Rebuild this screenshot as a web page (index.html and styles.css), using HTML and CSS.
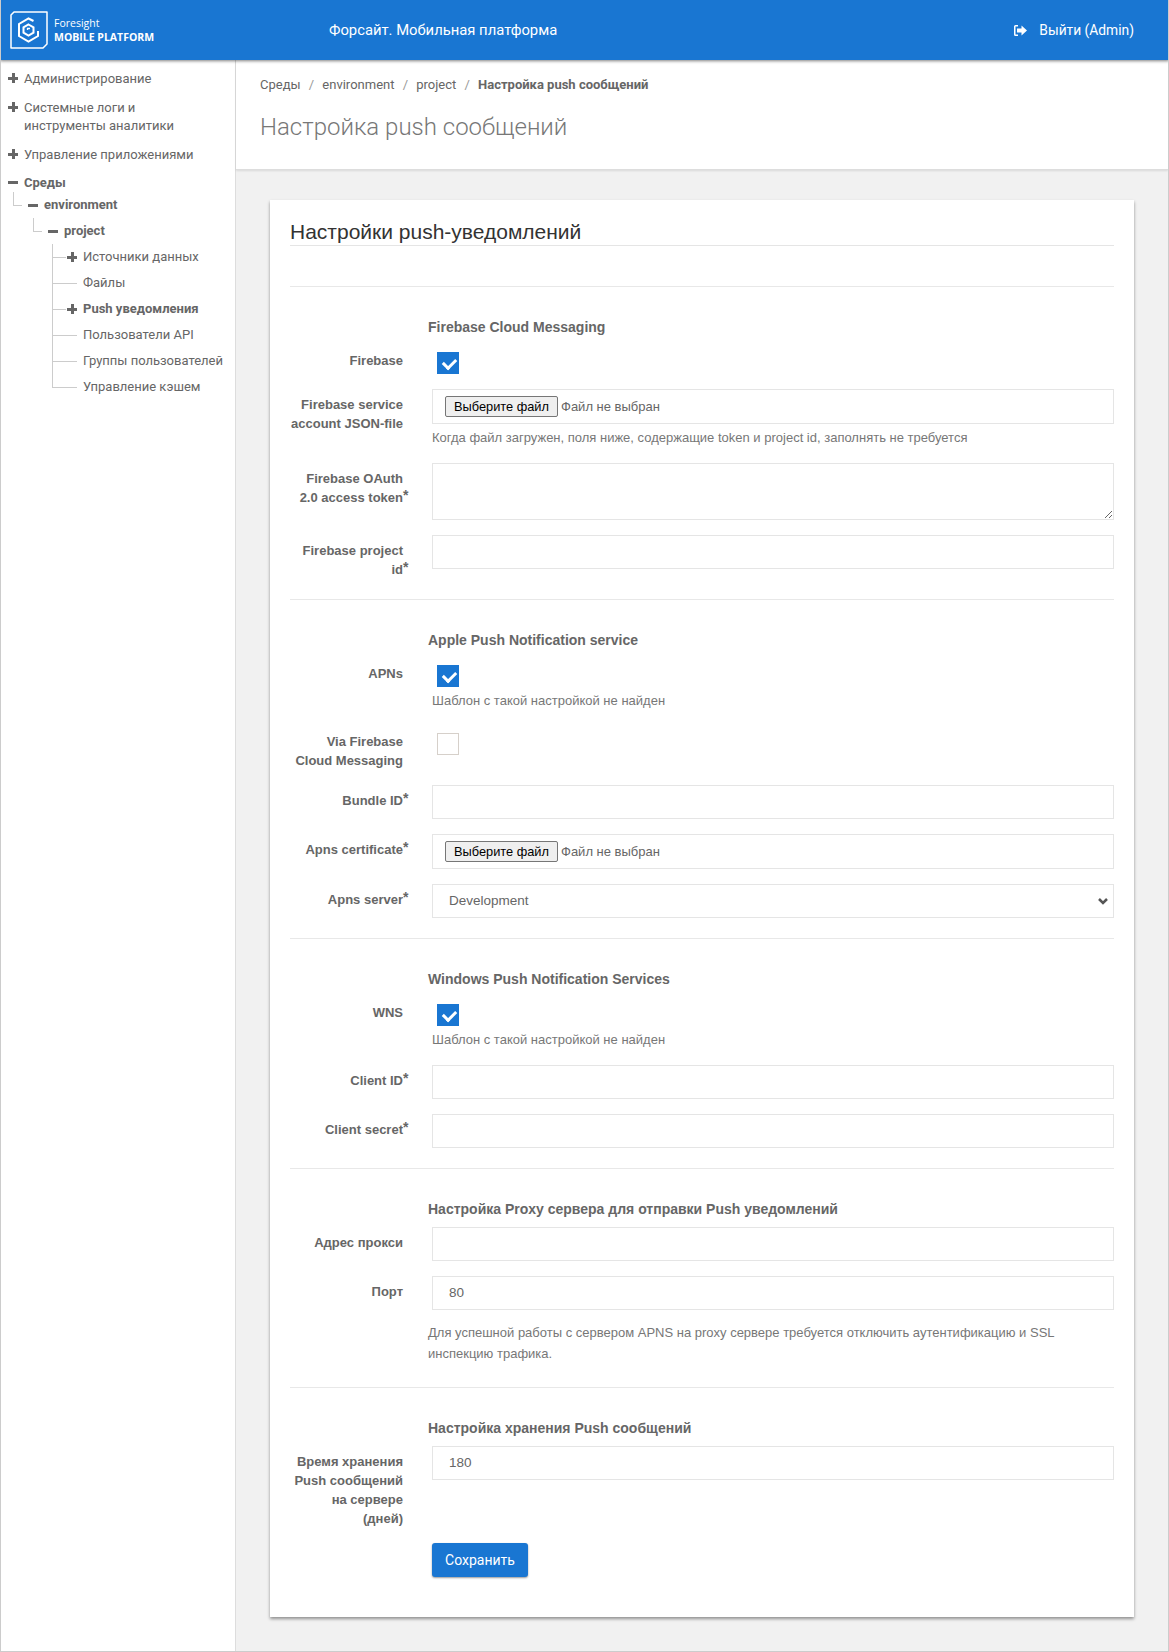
FILE: index.html
```html
<!DOCTYPE html>
<html lang="ru">
<head>
<meta charset="UTF-8">
<meta name="viewport" content="width=device-width, initial-scale=1.0">
<title>Настройка push сообщений</title>
<link rel="stylesheet" href="styles.css">
</head>
<body>
    <header class="topbar">
        <div class="logo">
            <svg class="logo-icon" width="38" height="38" viewBox="0 0 38 38" fill="none" stroke="#fff">
                <path d="M4 1H37V33L33 37H1V4Z" stroke-width="1.500" stroke-linejoin="round"/>
                <path d="M23.500 10L18.500 7.500L9 13V25L18.500 30.500L28 25V20" stroke-width="2"/>
                <path d="M18.500 13.500L23.500 16.300V21.700L18.500 24.500L13.500 21.700V16.300Z" stroke-width="2"/>
                <path d="M17.500 19V17.500H20" stroke-width="1.300"/>
            </svg>
            <div class="logo-text">
                <span class="logo-top">Foresight</span>
                <span class="logo-bottom">MOBILE PLATFORM</span>
            </div>
        </div>
        <div class="app-name">Форсайт. Мобильная платформа</div>
        <a class="logout">
            <svg width="13" height="11" viewBox="0 0 13 11" fill="#fff">
                <path d="M4 0H1.500A1.500 1.500 0 0 0 0 1.500V9.500A1.500 1.500 0 0 0 1.500 11H4V9.500H1.500V1.500H4Z"/>
                <path d="M7.500 0.500L13 5.500L7.500 10.500V7.500H3V3.500H7.500Z"/>
            </svg>
            Выйти (Admin)
        </a>
    </header>

    <div class="layout">
        <nav class="sidebar">
            <div class="node"><span class="tree-icon plus"></span>Администрирование</div>
            <div class="node"><span class="tree-icon plus"></span>Системные логи и<br>инструменты аналитики</div>
            <div class="node"><span class="tree-icon plus"></span>Управление приложениями</div>
            <div class="node node-open"><span class="tree-icon minus"></span>Среды</div>
            <div class="sub sub-env"><span class="elbow"></span><span class="tree-icon minus"></span>environment</div>
            <div class="sub sub-project"><span class="elbow"></span><span class="tree-icon minus"></span>project</div>
            <ul class="leaves">
                <li><span class="tree-icon plus"></span>Источники данных</li>
                <li class="plain">Файлы</li>
                <li class="current"><span class="tree-icon plus"></span>Push уведомления</li>
                <li class="plain">Пользователи API</li>
                <li class="plain">Группы пользователей</li>
                <li class="plain">Управление кэшем</li>
            </ul>
        </nav>

        <main class="content">
            <div class="page-head">
                <div class="crumbs">
                    <span>Среды</span><i>/</i><span>environment</span><i>/</i><span>project</span><i>/</i><b>Настройка push сообщений</b>
                </div>
                <h1>Настройка push сообщений</h1>
            </div>

            <div class="card">
                <h2>Настройки push-уведомлений</h2>
                <hr class="first-rule">

                <h3>Firebase Cloud Messaging</h3>
                <div class="row row-check">
                    <label>Firebase</label>
                    <div class="field"><span class="check on"></span></div>
                </div>
                <div class="row">
                    <label>Firebase service account JSON-file</label>
                    <div class="field">
                        <div class="input file"><button type="button">Выберите файл</button>Файл не выбран</div>
                        <p class="hint">Когда файл загружен, поля ниже, содержащие token и project id, заполнять не требуется</p>
                    </div>
                </div>
                <div class="row row-after-hint">
                    <label>Firebase OAuth 2.0 access token<sup>*</sup></label>
                    <div class="field"><textarea class="input"></textarea></div>
                </div>
                <div class="row">
                    <label>Firebase project id<sup>*</sup></label>
                    <div class="field"><div class="input"></div></div>
                </div>
                <hr>

                <h3>Apple Push Notification service</h3>
                <div class="row row-check">
                    <label>APNs</label>
                    <div class="field">
                        <span class="check on"></span>
                        <p class="hint">Шаблон с такой настройкой не найден</p>
                    </div>
                </div>
                <div class="row row-check row-via">
                    <label>Via Firebase Cloud Messaging</label>
                    <div class="field"><span class="check"></span></div>
                </div>
                <div class="row">
                    <label>Bundle ID<sup>*</sup></label>
                    <div class="field"><div class="input"></div></div>
                </div>
                <div class="row">
                    <label>Apns certificate<sup>*</sup></label>
                    <div class="field"><div class="input file"><button type="button">Выберите файл</button>Файл не выбран</div></div>
                </div>
                <div class="row">
                    <label>Apns server<sup>*</sup></label>
                    <div class="field">
                        <div class="input select">Development
                            <svg width="10" height="7" viewBox="0 0 10 7" fill="none" stroke="#555" stroke-width="2.500"><path d="M1 1L5 5L9 1"/></svg>
                        </div>
                    </div>
                </div>
                <hr>

                <h3>Windows Push Notification Services</h3>
                <div class="row row-check">
                    <label>WNS</label>
                    <div class="field">
                        <span class="check on"></span>
                        <p class="hint">Шаблон с такой настройкой не найден</p>
                    </div>
                </div>
                <div class="row row-after-hint">
                    <label>Client ID<sup>*</sup></label>
                    <div class="field"><div class="input"></div></div>
                </div>
                <div class="row">
                    <label>Client secret<sup>*</sup></label>
                    <div class="field"><div class="input"></div></div>
                </div>
                <hr>

                <h3>Настройка Proxy сервера для отправки Push уведомлений</h3>
                <div class="row row-first">
                    <label>Адрес прокси</label>
                    <div class="field"><div class="input"></div></div>
                </div>
                <div class="row">
                    <label>Порт</label>
                    <div class="field"><div class="input">80</div></div>
                </div>
                <p class="note">Для успешной работы с сервером APNS на proxy сервере требуется отключить аутентификацию и SSL инспекцию трафика.</p>
                <hr class="after-note">

                <h3>Настройка хранения Push сообщений</h3>
                <div class="row row-first row-last">
                    <label>Время хранения Push сообщений на сервере (дней)</label>
                    <div class="field"><div class="input">180</div></div>
                </div>
                <div class="actions"><button type="button" class="save">Сохранить</button></div>
            </div>
        </main>
    </div>
</body>
</html>
```

FILE: styles.css
```css
* {
    box-sizing: border-box;
}
html, body {
    margin: 0;
    padding: 0;
}
body {
    width: 1169px;
    height: 1652px;
    font-family: Roboto, sans-serif;
    font-size: 13px;
    color: #666;
    background-color: #f1f1f1;
    border: 1px solid #ccc;
    border-top: none;
    overflow: hidden;
}

/* top bar */
.topbar {
    display: flex;
    align-items: center;
    height: 60px;
    margin: 0 -1px;
    background-color: #1976d2;
    color: #fff;
    box-shadow: 0 1px 3px rgba(0, 0, 0, 0.5);
    position: relative;
}
.logo {
    display: flex;
    align-items: center;
    width: 329px;
    padding-left: 10px;
}
.logo-text {
    display: flex;
    flex-direction: column;
    margin-left: 6px;
    font-family: "Open Sans", sans-serif;
}
.logo-top {
    font-size: 10.500px;
    line-height: 14px;
}
.logo-bottom {
    font-size: 10.500px;
    font-weight: 700;
    line-height: 15px;
}
.app-name {
    flex: 1;
    font-size: 14.800px;
}
.logout {
    display: flex;
    align-items: center;
    gap: 12px;
    font-size: 13.800px;
    padding-right: 35px;
}

.layout {
    display: flex;
    height: 1592px;
}

/* left tree */
.sidebar {
    width: 235px;
    flex-shrink: 0;
    background-color: #fff;
    border-right: 1px solid #ddd;
    padding: 10px 0 0 7px;
    line-height: 18px;
}
.node {
    position: relative;
    padding-left: 16px;
    margin-bottom: 11px;
}
.node-open {
    font-weight: 700;
    margin-top: -1px;
    margin-bottom: 0;
}
.tree-icon {
    position: absolute;
    width: 10px;
    height: 10px;
    left: 0;
    top: 3px;
}
.tree-icon::before, .plus::after {
    content: "";
    position: absolute;
    background-color: #666;
    left: 0;
    top: 4px;
    width: 10px;
    height: 3px;
}
.plus::after {
    left: 3.500px;
    top: 0;
    width: 3px;
    height: 10px;
}
.sub {
    position: relative;
    font-weight: 700;
    height: 26px;
    line-height: 26px;
}
.sub .tree-icon {
    top: 8px;
}
.sub-env {
    padding-left: 36px;
}
.sub-env .tree-icon {
    left: 20px;
}
.sub-project {
    padding-left: 56px;
}
.sub-project .tree-icon {
    left: 40px;
}
.elbow {
    position: absolute;
    border-left: 1px solid #ccc;
    border-bottom: 1px solid #ccc;
    width: 9px;
    height: 14px;
    top: 0;
}
.sub-env .elbow {
    left: 5px;
}
.sub-project .elbow {
    left: 25px;
}
.leaves {
    list-style: none;
    margin: 0 0 0 44px;
    padding: 0;
    border-left: 1px solid #ccc;
    height: 144px;
}
.leaves li {
    position: relative;
    height: 26px;
    line-height: 26px;
    padding-left: 30px;
    white-space: nowrap;
}
.leaves li .tree-icon {
    left: 14px;
    top: 8px;
}
.leaves li::before {
    content: "";
    position: absolute;
    left: 0;
    top: 13px;
    width: 13px;
    border-top: 1px solid #ccc;
}
.leaves li.plain::before {
    width: 24px;
}
.leaves li.current {
    font-weight: 700;
}

/* main column */
.content {
    flex: 1;
    min-width: 0;
}
.page-head {
    height: 110px;
    background-color: #fff;
    padding: 16px 24px 0;
    border-bottom: 1px solid #ddd;
    box-shadow: 0 1px 2px rgba(0, 0, 0, 0.1);
}
.crumbs {
    font-size: 13px;
    line-height: 18px;
    white-space: nowrap;
}
.crumbs i {
    font-style: normal;
    color: #999;
    padding: 0 8.200px;
}
h1 {
    margin: 18px 0 0;
    font-size: 24px;
    font-weight: 300;
    line-height: 30px;
    color: #777;
}
.card {
    margin: 30px 34px 0;
    padding: 19px 20px 0;
    height: 1417px;
    background-color: #fff;
    box-shadow: 0 2px 3px rgba(0, 0, 0, 0.4);
    font-family: "Liberation Sans", Arial, sans-serif;
}
h2 {
    margin: 0;
    font-size: 21px;
    font-weight: 400;
    line-height: 26px;
    color: #333;
    border-bottom: 1px solid #e5e5e5;
    height: 27px;
}
hr {
    border: none;
    border-top: 1px solid #e8e8e8;
    margin: 20px 0 0;
}
.first-rule {
    margin-top: 40px;
}
.after-note {
    margin-top: 23px;
}
h3 {
    margin: 32px 0 0 138px;
    font-size: 14px;
    font-weight: 700;
    line-height: 16px;
    color: #666;
}
.row {
    display: flex;
    margin-top: 15px;
}
.row label {
    position: relative;
    width: 113px;
    flex-shrink: 0;
    text-align: right;
    font-size: 13px;
    font-weight: 700;
    line-height: 19px;
    padding-top: 6px;
    color: #666;
}
sup {
    position: absolute;
    font-size: 14px;
    line-height: 19px;
    margin-top: -2px;
}
.field {
    flex: 1;
    margin-left: 29px;
    min-width: 0;
}
.input {
    display: block;
    width: 100%;
    height: 34px;
    padding: 6px 16px;
    border: 1px solid #e5e5e5;
    background-color: #fff;
    font-family: "Liberation Sans", Arial, sans-serif;
    font-size: 13.500px;
    line-height: 20px;
    color: #666;
}
textarea.input {
    height: 57px;
    resize: both;
}
.file {
    display: flex;
    align-items: center;
    padding: 0 12px;
    height: 35px;
    font-size: 13px;
    white-space: nowrap;
}
.file button {
    font-family: "Liberation Sans", Arial, sans-serif;
    font-size: 12.800px;
    height: 21px;
    width: 113px;
    padding: 0;
    margin-right: 3px;
    color: #000;
    background-color: #efefef;
    border: 1px solid #767676;
    border-radius: 2px;
}
.select {
    display: flex;
    align-items: center;
    justify-content: space-between;
    padding-right: 5px;
}
.check {
    display: block;
    width: 22px;
    height: 22px;
    margin-left: 5px;
    border: 1px solid #d6d0ca;
    position: relative;
}
.check.on {
    background-color: #1976d2;
    border-color: #1976d2;
}
.check.on::after {
    content: "";
    position: absolute;
    left: 5px;
    top: 5px;
    width: 10px;
    height: 6px;
    border-left: 3px solid #fff;
    border-bottom: 3px solid #fff;
    transform: rotate(-45deg);
}
.hint {
    margin: 5px 0 0;
    font-size: 13px;
    line-height: 17px;
    color: #777;
}
.row-check {
    margin-top: 17px;
}
.row-check label {
    padding-top: 0;
    margin-top: -1px;
}
.row-after-hint {
    margin-top: 17px;
}
.row-via {
    margin-top: 24px;
}
.row-first {
    margin-top: 10px;
}
.note {
    margin: 12px 0 0 138px;
    font-size: 13px;
    line-height: 21px;
    color: #777;
}
.actions {
    margin: 0 0 0 142px;
}
.row-last .field {
    height: 97px;
}
.save {
    height: 34px;
    width: 96px;
    border: none;
    border-radius: 3px;
    background-color: #1976d2;
    color: #fff;
    font-family: Roboto, sans-serif;
    font-size: 14px;
    box-shadow: 0 1px 2px rgba(0, 0, 0, 0.4);
}
```
